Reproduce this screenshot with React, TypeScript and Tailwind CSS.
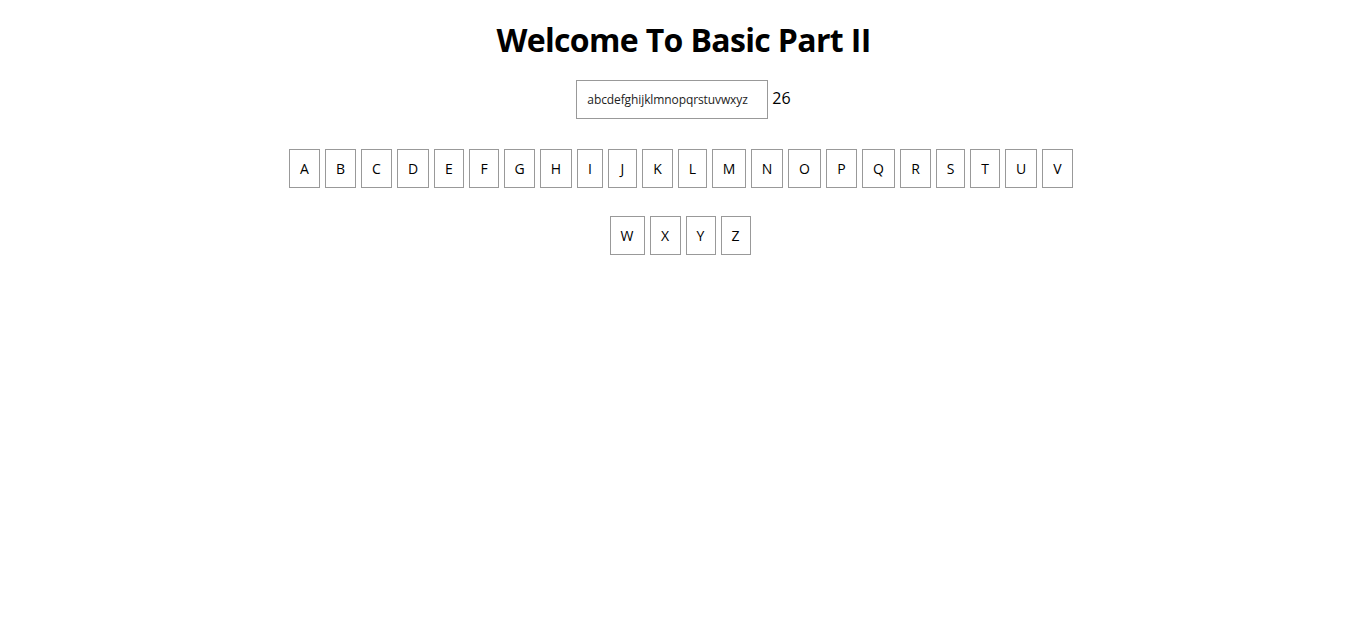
const rowOne = [
  { letter: 'A', w: 'w-[31px]' },
  { letter: 'B', w: 'w-[31px]' },
  { letter: 'C', w: 'w-[31px]' },
  { letter: 'D', w: 'w-[32px]' },
  { letter: 'E', w: 'w-[30px]' },
  { letter: 'F', w: 'w-[30px]' },
  { letter: 'G', w: 'w-[31px]' },
  { letter: 'H', w: 'w-[32px]' },
  { letter: 'I', w: 'w-[26px]' },
  { letter: 'J', w: 'w-[29px]' },
  { letter: 'K', w: 'w-[31px]' },
  { letter: 'L', w: 'w-[29px]' },
  { letter: 'M', w: 'w-[34px]' },
  { letter: 'N', w: 'w-[32px]' },
  { letter: 'O', w: 'w-[33px]' },
  { letter: 'P', w: 'w-[31px]' },
  { letter: 'Q', w: 'w-[33px]' },
  { letter: 'R', w: 'w-[31px]' },
  { letter: 'S', w: 'w-[29px]' },
  { letter: 'T', w: 'w-[30px]' },
  { letter: 'U', w: 'w-[32px]' },
  { letter: 'V', w: 'w-[31px]' },
]

const rowTwo = [
  { letter: 'W', w: 'w-[35px]' },
  { letter: 'X', w: 'w-[31px]' },
  { letter: 'Y', w: 'w-[30px]' },
  { letter: 'Z', w: 'w-[30px]' },
]

function LetterButton({ letter, w }: { letter: string; w: string }) {
  return (
    <button
      type="button"
      className={`mr-[5px] flex h-[39px] ${w} items-center justify-center border border-[#999] bg-white text-[14px] leading-[17px] text-black`}
    >
      {letter}
    </button>
  )
}

export default function App() {
  const text = 'abcdefghijklmnopqrstuvwxyz'

  return (
    <div className="min-h-screen bg-white pl-4 text-center font-['Open_Sans',sans-serif] text-black">
      <h1 className="pt-[21px] text-[32px] leading-[37px] font-bold tracking-[-0.65px]">Welcome To Basic Part II</h1>

      <div className="mt-[22px] flex items-center justify-center gap-1">
        <input
          defaultValue={text}
          className="h-[39px] w-[192px] border border-[#999] bg-white px-[10px] text-[12px] tracking-[-0.1px] text-[#222] outline-none"
        />
        <span className="pb-[3px] text-[16px]">{text.length}</span>
      </div>

      <div className="mt-[30px] flex justify-center">
        {rowOne.map((b) => (
          <LetterButton key={b.letter} {...b} />
        ))}
      </div>

      <div className="mt-[28px] flex justify-center pr-[2px]">
        {rowTwo.map((b) => (
          <LetterButton key={b.letter} {...b} />
        ))}
      </div>
    </div>
  )
}
